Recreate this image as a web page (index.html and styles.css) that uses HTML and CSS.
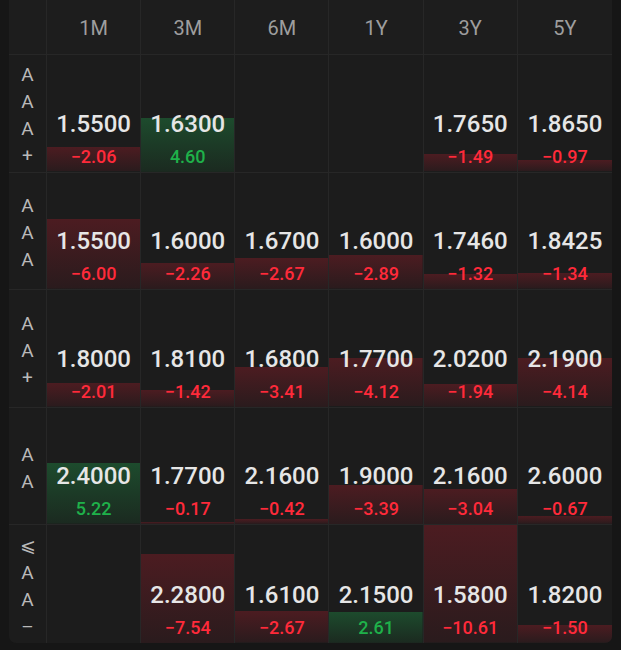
FILE: index.html
```html
<!DOCTYPE html>
<html lang="zh-CN">

<head>
    <meta charset="UTF-8" />
    <title>收益率矩阵</title>
    <link rel="stylesheet" href="styles.css">
</head>

<body>
    <div class="matrix" id="matrix">
        <div class="head corner"></div>
    </div>

    <script>
        const terms = ['1M', '3M', '6M', '1Y', '3Y', '5Y'];
        const rows = [
            { rating: 'AAA+', cells: [[1.55, -2.06], [1.63, 4.60], null, null, [1.765, -1.49], [1.865, -0.97]] },
            { rating: 'AAA', cells: [[1.55, -6.00], [1.60, -2.26], [1.67, -2.67], [1.60, -2.89], [1.746, -1.32], [1.8425, -1.34]] },
            { rating: 'AA+', cells: [[1.80, -2.01], [1.81, -1.42], [1.68, -3.41], [1.77, -4.12], [2.02, -1.94], [2.19, -4.14]] },
            { rating: 'AA', cells: [[2.40, 5.22], [1.77, -0.17], [2.16, -0.42], [1.90, -3.39], [2.16, -3.04], [2.60, -0.67]] },
            { rating: '⩽AA–', cells: [null, [2.28, -7.54], [1.61, -2.67], [2.15, 2.61], [1.58, -10.61], [1.82, -1.50]] }
        ];

        const matrix = document.getElementById('matrix');

        terms.forEach(t => {
            const el = document.createElement('div');
            el.className = 'head';
            el.textContent = t;
            matrix.appendChild(el);
        });

        rows.forEach(row => {
            const label = document.createElement('div');
            label.className = 'rating';
            for (const ch of row.rating) {
                const s = document.createElement('span');
                s.textContent = ch;
                label.appendChild(s);
            }
            matrix.appendChild(label);

            row.cells.forEach(c => {
                const cell = document.createElement('div');
                cell.className = 'cell';
                if (c) {
                    const [value, change] = c;
                    cell.classList.add(change < 0 ? 'down' : 'up');
                    // bar height: 10% of the cell per point, capped at full height
                    cell.style.backgroundSize = '100% ' + Math.min(Math.abs(change) * 10, 100) + '%';
                    const sign = change < 0 ? '−' : '';
                    cell.innerHTML =
                        `<span class="value">${value.toFixed(4)}</span>` +
                        `<span class="change">${sign}${Math.abs(change).toFixed(2)}</span>`;
                }
                matrix.appendChild(cell);
            });
        });
    </script>
</body>

</html>
```

FILE: styles.css
```css
body {
    margin: 0;
    background: #161616;
    font-family: Roboto, "Noto Sans", "Noto Sans CJK SC", sans-serif;
}

.matrix {
    display: grid;
    grid-template-columns: 38px repeat(6, 1fr);
    grid-template-rows: 55px repeat(5, 117.5px);
    width: 603px;
    margin: 0 9px;
    background: #1c1c1c;
    border-radius: 0 0 7px 7px;
    overflow: hidden;
}

.head,
.rating,
.cell {
    border-right: 1px solid #272727;
    border-bottom: 1px solid #272727;
}

.head:nth-child(7),
.cell:nth-child(7n) {
    border-right: none;
}

.head {
    display: flex;
    align-items: center;
    justify-content: center;
    background: #1d1d1d;
    color: #9e9e9e;
    font-size: 20px;
    font-weight: 400;
    padding-top: 2px;
}

.rating {
    display: flex;
    flex-direction: column;
    align-items: center;
    justify-content: center;
    color: #b9b9b9;
    font-size: 19px;
    font-weight: 400;
    line-height: 27px;
    padding-top: 4px;
}

.rating:nth-last-child(7) {
    border-bottom: none;
}

.cell {
    display: flex;
    flex-direction: column;
    align-items: center;
    justify-content: flex-end;
    background-repeat: no-repeat;
    background-position: bottom;
    background-size: 100% 0%;
}

.matrix > :nth-last-child(-n+6) {
    border-bottom: none;
}

.cell.down {
    background-image: linear-gradient(to bottom, #4c1c21, #2a1b1d);
}

.cell.up {
    background-image: linear-gradient(to bottom, #1d4b2d, #1b2a20);
}

.value {
    color: #e6e6e6;
    font-size: 24px;
    font-weight: 500;
    line-height: 32px;
}

.change {
    font-size: 18px;
    font-weight: 500;
    line-height: 28px;
    margin-top: 3px;
    padding-bottom: 1px;
}

.down .change {
    color: #ff2a3a;
}

.up .change {
    color: #1fb14a;
}
```
